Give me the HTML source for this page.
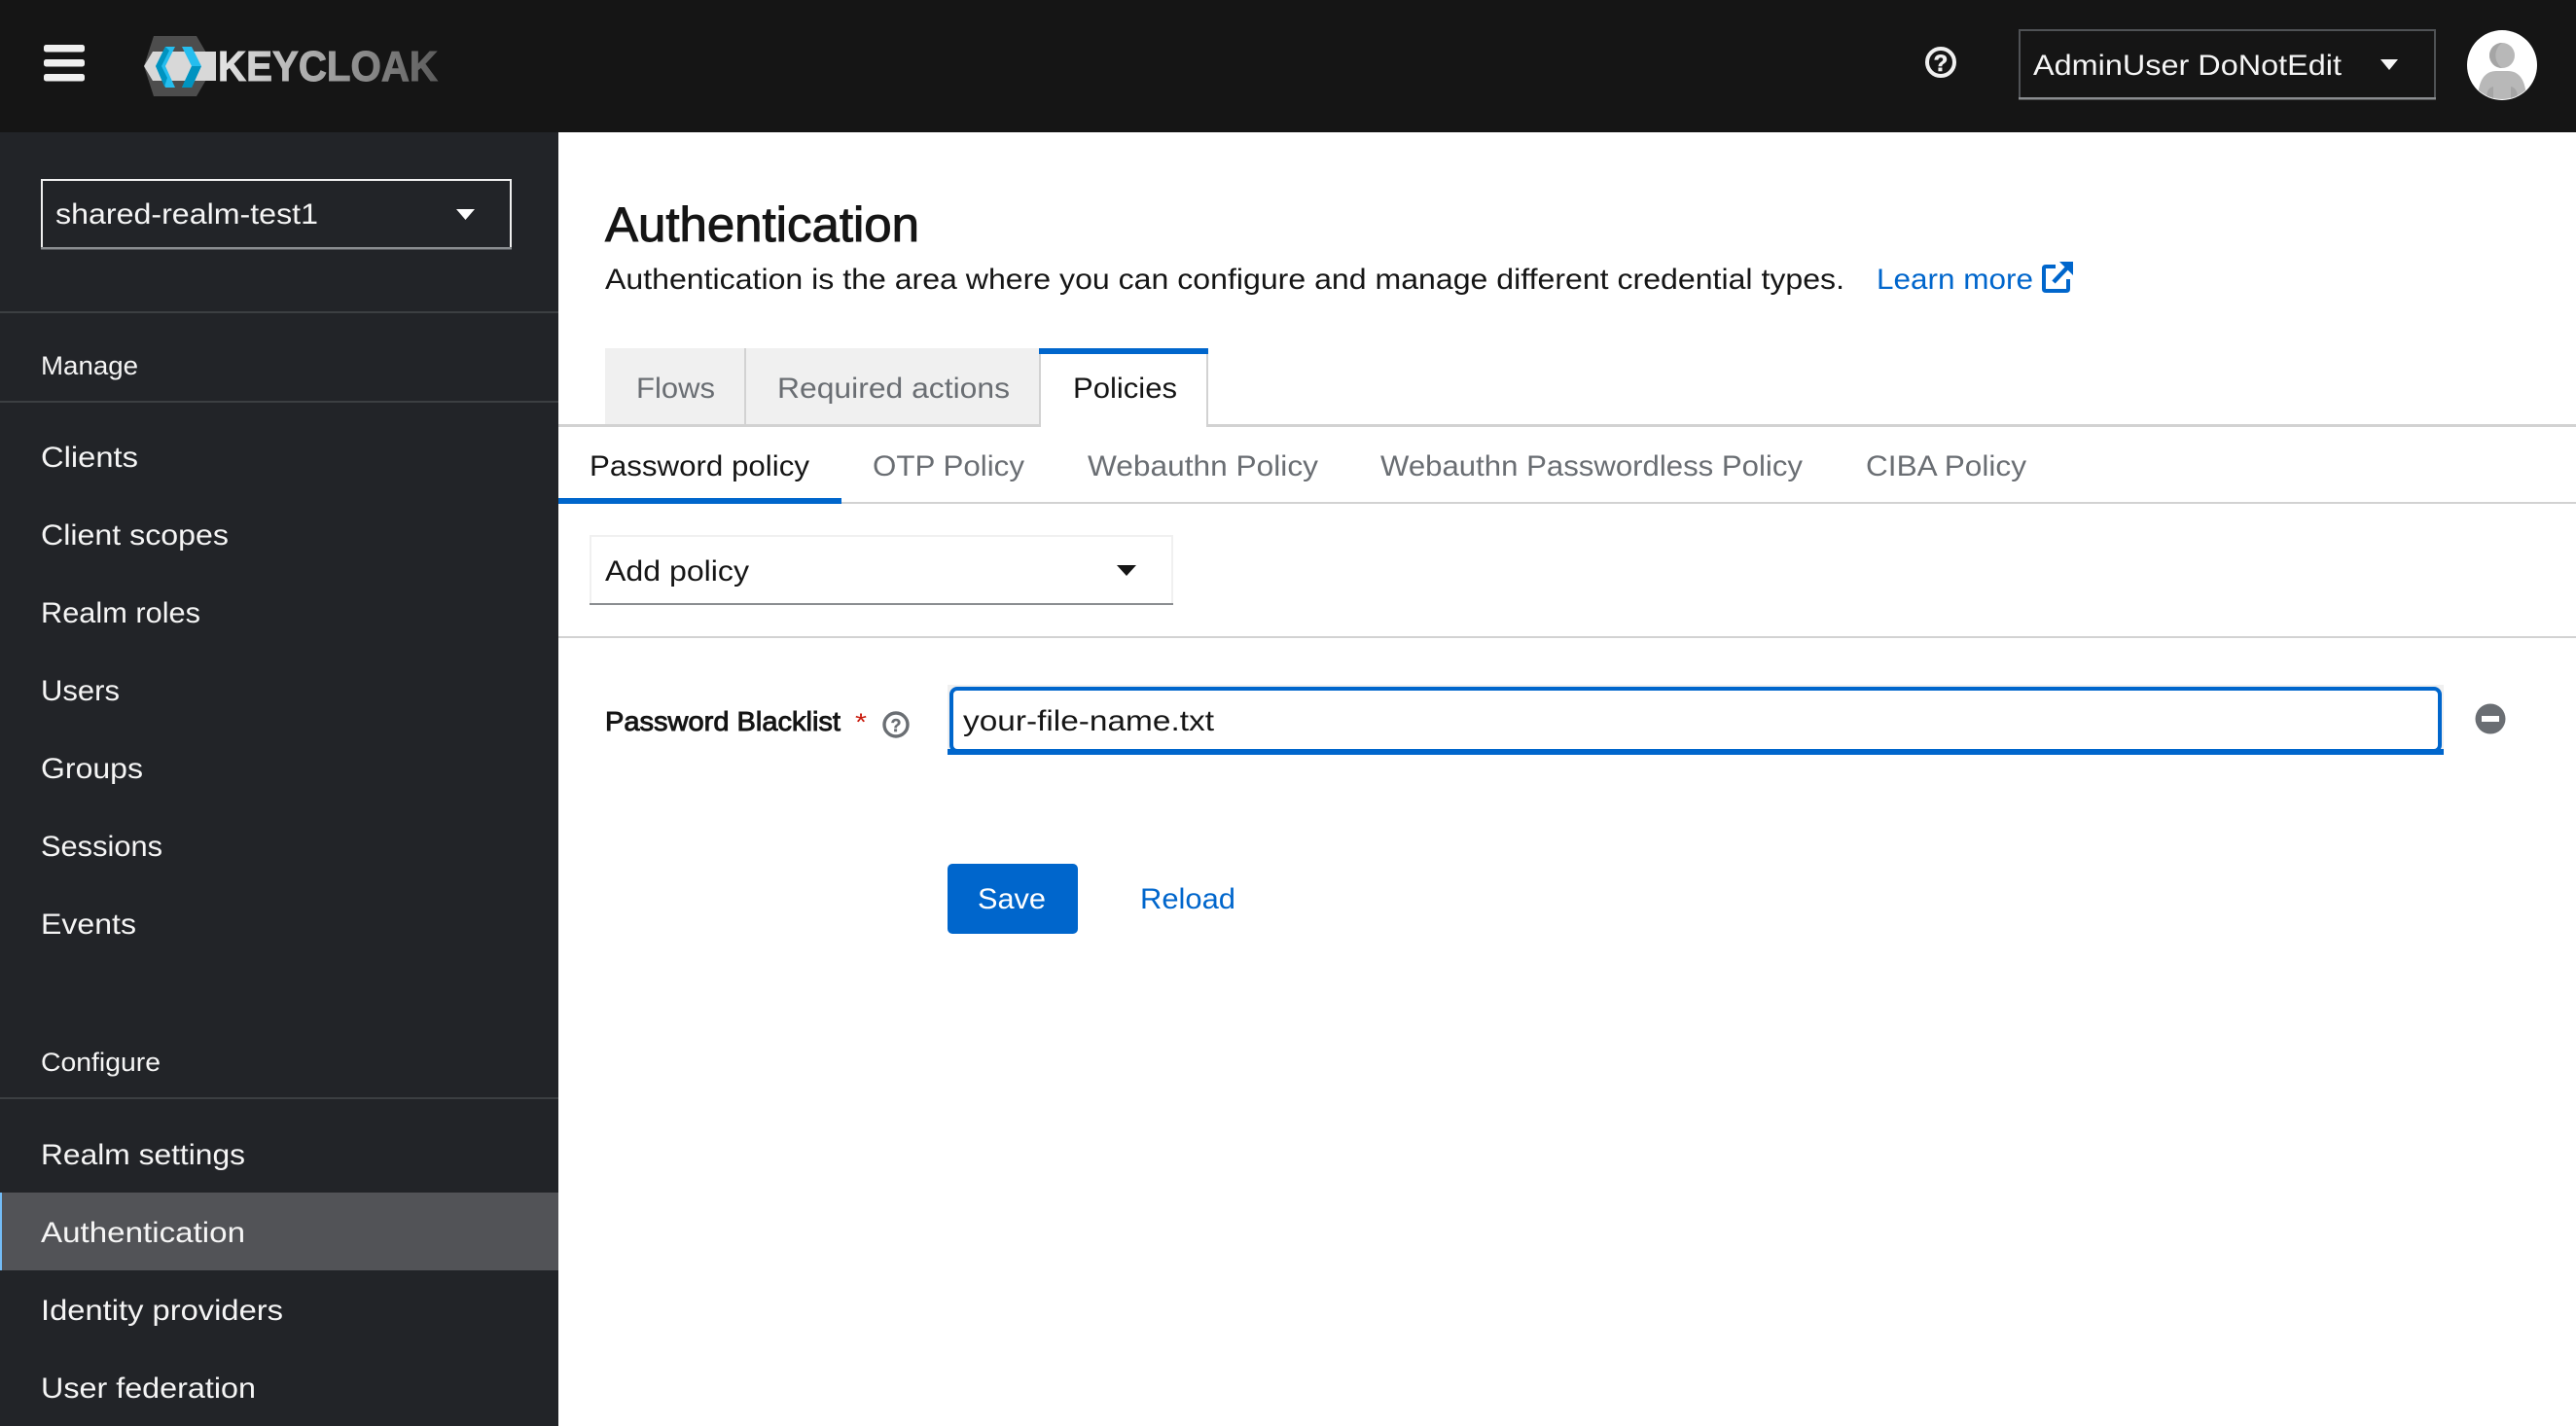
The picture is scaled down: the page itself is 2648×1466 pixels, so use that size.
<!DOCTYPE html>
<html lang="en"><head><meta charset="utf-8"><title>Authentication</title>
<style>
html,body{margin:0;padding:0;background:#fff;width:2648px;height:1466px;overflow:hidden}
svg{display:block}
text{font-family:"Liberation Sans",sans-serif;font-size:30px}
.n{fill:#f5f5f5}.g{fill:#6a6e73}.d{fill:#151515}.b{fill:#0066cc}
.s{font-size:27px}
</style></head><body>
<svg xmlns="http://www.w3.org/2000/svg" width="2648" height="1466" viewBox="0 0 2648 1466">
<defs>
<linearGradient id="kc" gradientUnits="userSpaceOnUse" x1="225" y1="0" x2="450" y2="0"><stop offset="0" stop-color="#e4e4e4"/><stop offset=".5" stop-color="#a0a0a0"/><stop offset="1" stop-color="#5c5c5c"/></linearGradient>
<clipPath id="av"><circle cx="2572" cy="66" r="36"/></clipPath>
</defs>
<rect width="2648" height="1466" fill="#fff"/>
<!-- header -->
<rect width="2648" height="136" fill="#151515"/>
<rect x="45" y="46" width="42" height="7.5" rx="2.5" fill="#f0f0f0"/>
<rect x="45" y="61" width="42" height="7.5" rx="2.5" fill="#f0f0f0"/>
<rect x="45" y="76" width="42" height="7.5" rx="2.5" fill="#f0f0f0"/>
<polygon points="158,37 202,37 220,68 202,99 158,99 148,68" fill="#4d4d4d"/>
<polygon points="148,68 157,53 222,53 222,83 157,83" fill="#d8d8d8"/>
<polygon points="160,68 170,48 180,48 170,68 180,90 170,90" fill="#25bdee"/>
<polygon points="160,68 170,48 174,52 166,68 172,80 169,89" fill="#0093c0"/>
<polygon points="187,48 197,48 207,68 197,90 187,90 197,68" fill="#25bdee"/>
<polygon points="207,68 197,90 187,90 190,83 197,68" fill="#0093c0"/>
<text x="224" y="83" textLength="226" lengthAdjust="spacingAndGlyphs" stroke="url(#kc)" stroke-width="1" style="font-size:43.5px;font-weight:700" fill="url(#kc)">KEYCLOAK</text>
<circle cx="1995" cy="64" r="14" fill="none" stroke="#f0f0f0" stroke-width="4"/>
<text x="1995" y="73" text-anchor="middle" stroke="#f0f0f0" stroke-width=".6" style="font-size:24px;font-weight:700" fill="#f0f0f0">?</text>
<rect x="2076" y="31" width="427" height="70" fill="none" stroke="#4f5255" stroke-width="2"/>
<rect x="2075" y="100" width="429" height="2.5" fill="#8a8d90"/>
<text x="2090" y="77" textLength="317" lengthAdjust="spacingAndGlyphs" class="n">AdminUser DoNotEdit</text>
<polygon points="2447,61 2465,61 2456,72" fill="#f5f5f5"/>
<circle cx="2572" cy="67" r="36" fill="#fff"/>
<circle cx="2572" cy="57" r="13" fill="#b8b8b8"/>
<path d="M2572 44 A13 13 0 0 0 2572 70 A16 16 0 0 1 2572 44 Z" fill="#a5a5a5"/>
<g clip-path="url(#av)">
<path d="M2548 104 V92 C2550 80 2556 73 2566 73 L2578 73 C2588 73 2594 80 2596 92 V104 Z" fill="#b8b8b8"/>
<path d="M2556 102 C2556 94 2558 90 2563 89 V102 Z M2588 102 C2588 94 2586 90 2581 89 V102 Z" fill="#a5a5a5"/>
</g>
<!-- sidebar -->
<rect x="0" y="136" width="574" height="1330" fill="#222428"/>
<rect x="43" y="185" width="482" height="70" fill="none" stroke="#f0f0f0" stroke-width="2"/>
<rect x="42" y="254" width="484" height="2.5" fill="#8a8d90"/>
<text x="57" y="230" textLength="270" lengthAdjust="spacingAndGlyphs" class="n">shared-realm-test1</text>
<polygon points="469,215 488,215 478.5,226" fill="#fff"/>
<rect x="0" y="320" width="574" height="2" fill="#3c3f42"/>
<text x="42" y="385" textLength="100" lengthAdjust="spacingAndGlyphs" class="n s">Manage</text>
<rect x="0" y="412" width="574" height="2" fill="#3c3f42"/>
<text x="42" y="480" textLength="100" lengthAdjust="spacingAndGlyphs" class="n">Clients</text>
<text x="42" y="560" textLength="193" lengthAdjust="spacingAndGlyphs" class="n">Client scopes</text>
<text x="42" y="640" textLength="164" lengthAdjust="spacingAndGlyphs" class="n">Realm roles</text>
<text x="42" y="720" textLength="81" lengthAdjust="spacingAndGlyphs" class="n">Users</text>
<text x="42" y="800" textLength="105" lengthAdjust="spacingAndGlyphs" class="n">Groups</text>
<text x="42" y="880" textLength="125" lengthAdjust="spacingAndGlyphs" class="n">Sessions</text>
<text x="42" y="960" textLength="98" lengthAdjust="spacingAndGlyphs" class="n">Events</text>
<text x="42" y="1101" textLength="123" lengthAdjust="spacingAndGlyphs" class="n s">Configure</text>
<rect x="0" y="1128" width="574" height="2" fill="#3c3f42"/>
<text x="42" y="1197" textLength="210" lengthAdjust="spacingAndGlyphs" class="n">Realm settings</text>
<rect x="0" y="1226" width="574" height="80" fill="#525357"/>
<rect x="0" y="1226" width="2" height="80" fill="#73bcf7"/>
<text x="42" y="1277" textLength="210" lengthAdjust="spacingAndGlyphs" class="n">Authentication</text>
<text x="42" y="1357" textLength="249" lengthAdjust="spacingAndGlyphs" class="n">Identity providers</text>
<text x="42" y="1437" textLength="221" lengthAdjust="spacingAndGlyphs" class="n">User federation</text>
<!-- page heading -->
<text x="622" y="248" textLength="323" lengthAdjust="spacingAndGlyphs" class="d" stroke="#151515" stroke-width="1" style="font-size:50px">Authentication</text>
<text x="622" y="297" textLength="1274" lengthAdjust="spacingAndGlyphs" class="d">Authentication is the area where you can configure and manage different credential types.</text>
<text x="1929" y="297" textLength="161" lengthAdjust="spacingAndGlyphs" class="b">Learn more</text>
<path d="M2113 274 H2103 Q2101 274 2101 276 V297 Q2101 299 2103 299 H2124 Q2126 299 2126 297 V287" fill="none" stroke="#0066cc" stroke-width="4"/>
<path d="M2111 290 L2127 273" fill="none" stroke="#0066cc" stroke-width="4.5"/>
<polygon points="2117,269 2131,269 2131,283" fill="#0066cc"/>
<!-- tabs -->
<rect x="574" y="436" width="2074" height="3" fill="#d2d2d2"/>
<rect x="622" y="358" width="446" height="78" fill="#f0f0f0"/>
<rect x="765" y="358" width="2" height="78" fill="#d2d2d2"/>
<rect x="1068" y="358" width="174" height="81" fill="#fff"/>
<rect x="1068" y="364" width="2" height="75" fill="#d2d2d2"/>
<rect x="1240" y="364" width="2" height="75" fill="#d2d2d2"/>
<rect x="1068" y="358" width="174" height="6" fill="#0066cc"/>
<text x="654" y="409" textLength="81" lengthAdjust="spacingAndGlyphs" class="g">Flows</text>
<text x="799" y="409" textLength="239" lengthAdjust="spacingAndGlyphs" class="g">Required actions</text>
<text x="1103" y="409" textLength="107" lengthAdjust="spacingAndGlyphs" class="d">Policies</text>
<!-- subtabs -->
<rect x="574" y="516" width="2074" height="2" fill="#d2d2d2"/>
<rect x="574" y="512" width="291" height="6" fill="#0066cc"/>
<text x="606" y="489" textLength="226" lengthAdjust="spacingAndGlyphs" class="d">Password policy</text>
<text x="897" y="489" textLength="156" lengthAdjust="spacingAndGlyphs" class="g">OTP Policy</text>
<text x="1118" y="489" textLength="237" lengthAdjust="spacingAndGlyphs" class="g">Webauthn Policy</text>
<text x="1419" y="489" textLength="434" lengthAdjust="spacingAndGlyphs" class="g">Webauthn Passwordless Policy</text>
<text x="1918" y="489" textLength="165" lengthAdjust="spacingAndGlyphs" class="g">CIBA Policy</text>
<!-- add policy -->
<rect x="607" y="551" width="598" height="70" fill="#fff" stroke="#f0f0f0" stroke-width="2"/>
<rect x="606" y="620" width="600" height="2" fill="#8a8d90"/>
<text x="622" y="597" textLength="148" lengthAdjust="spacingAndGlyphs" class="d">Add policy</text>
<polygon points="1148,581 1168,581 1158,592" fill="#151515"/>
<rect x="574" y="654" width="2074" height="2" fill="#d2d2d2"/>
<!-- form -->
<text x="622" y="751" textLength="242" lengthAdjust="spacingAndGlyphs" class="d" stroke="#151515" stroke-width=".9" style="font-size:27.5px">Password Blacklist</text>
<text x="879" y="751" textLength="12" lengthAdjust="spacingAndGlyphs" fill="#c9190b" style="font-size:25px">*</text>
<circle cx="921" cy="745" r="12" fill="none" stroke="#6a6e73" stroke-width="3.4"/>
<text x="921" y="752" text-anchor="middle" stroke="#6a6e73" stroke-width=".4" style="font-size:18px;font-weight:700" class="g">?</text>
<rect x="974" y="704" width="1538" height="72" fill="#f0f0f0"/>
<rect x="978" y="708" width="1530" height="64" rx="6" fill="#fff" stroke="#0066cc" stroke-width="4"/>
<rect x="974" y="770" width="1538" height="6" fill="#0066cc"/>
<text x="990" y="751" textLength="258" lengthAdjust="spacingAndGlyphs" class="d">your-file-name.txt</text>
<circle cx="2560" cy="739" r="15.5" fill="#6a6e73"/>
<rect x="2551" y="736" width="18" height="6" fill="#fff"/>
<rect x="974" y="888" width="134" height="72" rx="5" fill="#0066cc"/>
<text x="1005" y="934" textLength="70" lengthAdjust="spacingAndGlyphs" fill="#fff">Save</text>
<text x="1172" y="934" textLength="98" lengthAdjust="spacingAndGlyphs" class="b">Reload</text>
</svg>
</body></html>
